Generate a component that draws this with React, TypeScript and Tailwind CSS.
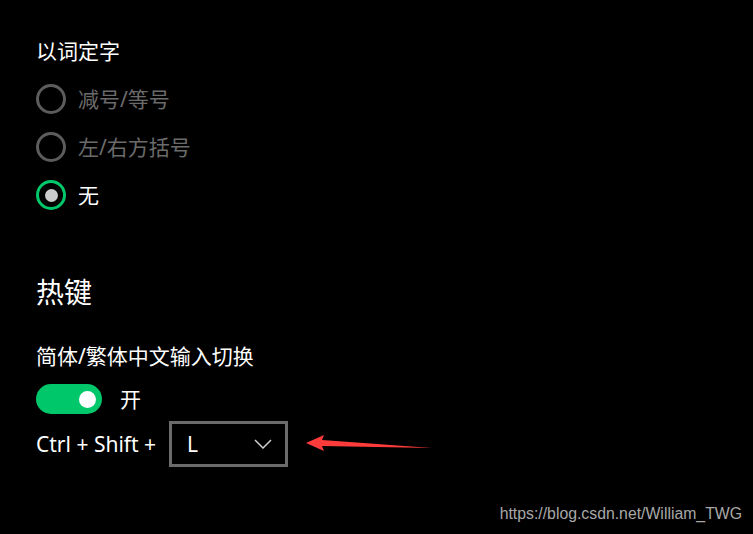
import React from "react";

const font = { fontFamily: '"Noto Sans", "Noto Sans CJK SC", sans-serif' };

function Radio({ label, checked, disabled }: { label: string; checked?: boolean; disabled?: boolean }) {
  return (
    <div className="flex h-[48px] items-center">
      {checked ? (
        <div className="flex h-[30px] w-[30px] items-center justify-center rounded-full border-[3px] border-[#00c86a]">
          <div className="h-[13px] w-[13px] rounded-full bg-[#cccccc]" />
        </div>
      ) : (
        <div className="h-[30px] w-[30px] rounded-full border-[3px] border-[#5c5c5c]" />
      )}
      <span className={`ml-[12px] text-[21px] leading-[28px] ${disabled ? "text-[#6b6b6b]" : "text-white"}`}>{label}</span>
    </div>
  );
}

export default function App() {
  return (
    <div className="relative h-[534px] w-[753px] overflow-hidden bg-black text-white" style={font}>
      <div className="flex flex-col px-[36px] pt-[37px]">
        <div className="text-[21px] leading-[28px]">以词定字</div>
        <div className="mt-[10px] flex flex-col">
          <Radio label="减号/等号" disabled />
          <Radio label="左/右方括号" disabled />
          <Radio label="无" checked />
        </div>
        <div className="mt-[55px] text-[28px] leading-[36px]">热键</div>
        <div className="mt-[32px] text-[21px] leading-[28px]">简体/繁体中文输入切换</div>
        <div className="mt-[14px] flex items-center">
          <div className="flex h-[30px] w-[66px] items-center justify-end rounded-full bg-[#00c86a] pr-[6px]">
            <div className="h-[17px] w-[17px] rounded-full bg-white" />
          </div>
          <span className="ml-[18px] text-[21px] leading-[28px]">开</span>
        </div>
        <div className="mt-[7px] flex items-center">
          <span className="text-[21px] leading-[28px]">Ctrl + Shift +</span>
          <div className="ml-[13px] flex h-[46px] w-[119px] items-center justify-between border-[3px] border-[#6b6b6b] pl-[15px] pr-[13px]">
            <span className="text-[21px] leading-[28px]">L</span>
            <svg width="18" height="10" viewBox="0 0 18 10" fill="none">
              <path d="M1 1 L9 9 L17 1" stroke="#cfcfcf" strokeWidth="1.5" />
            </svg>
          </div>
        </div>
      </div>
      <svg className="absolute left-[300px] top-[430px]" width="140" height="26" viewBox="0 0 140 26">
        <polygon points="6,13 24,5 22,10 132,18 22,16 24,21" fill="#ff3b3b" />
      </svg>
      <div
        className="absolute right-[11px] top-[504px] text-[15.8px] leading-[20px] text-[#a8a8a8]"
        style={{ fontFamily: '"Liberation Sans", Arial, sans-serif' }}
      >
        https://blog.csdn.net/William_TWG
      </div>
    </div>
  );
}
